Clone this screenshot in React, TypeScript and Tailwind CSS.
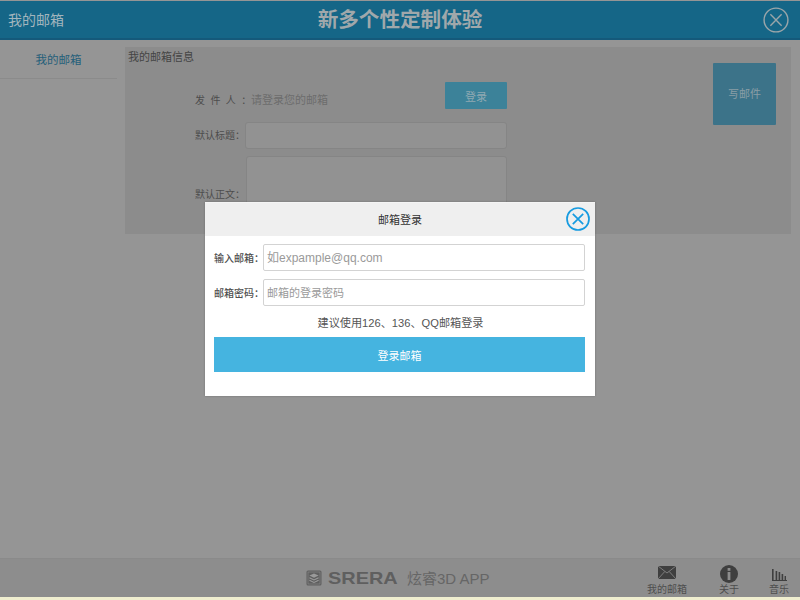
const font = { fontFamily: '"Liberation Sans","Noto Sans CJK SC",sans-serif' };

function CloseCircle({ className, stroke, width }: { className: string; stroke: string; width: number }) {
  return (
    <svg viewBox="0 0 24 24" className={className} fill="none" stroke={stroke} strokeWidth={width}>
      <circle cx="12" cy="12" r="11" />
      <path d="M6.8 6.8 17.2 17.2M17.2 6.8 6.8 17.2" />
    </svg>
  );
}

function Logo() {
  return (
    <div className="flex items-center text-[#5f5f5f]">
      <svg viewBox="0 0 16 16" className="w-[16px] h-[16px]">
        <rect x="0.5" y="0.5" width="15" height="15" rx="1.5" fill="#5f5f5f" />
        <rect x="2" y="2" width="12" height="12" fill="none" stroke="#8d8d8d" strokeWidth="0.6" />
        <path d="M8 3.4 12.6 5.6 8 7.8 3.4 5.6Z" fill="#9a9a9a" />
        <path d="M3.4 7.8 8 10 12.6 7.8M3.4 10.2 8 12.4 12.6 10.2" fill="none" stroke="#9a9a9a" strokeWidth="1.1" />
      </svg>
      <span className="ml-[6px] w-[72px] text-[17px] leading-none font-bold origin-left scale-x-[1.17] whitespace-nowrap">SRERA</span>
      <span className="ml-[7px] text-[15px] leading-none whitespace-nowrap text-[#666666]">炫睿3D APP</span>
    </div>
  );
}

export default function App() {
  return (
    <div style={font} className="relative h-[600px] w-[800px] overflow-hidden bg-[#959595] flex flex-col text-[#4f4f4f]">
      <header className="mt-px h-[39px] shrink-0 flex items-center bg-[#156687] border-b-2 border-[#14597a] relative">
        <div className="w-[150px] pl-[8px] pt-[2px] text-[14px] text-[#a2b5bd]">我的邮箱</div>
        <div className="flex-1 pr-[150px] pt-[2px] text-center text-[20.6px] font-bold text-[#a0a8ab]">新多个性定制体验</div>
        <div className="absolute right-[11px] top-[6px]">
          <CloseCircle className="w-[26px] h-[26px]" stroke="#9aa5a9" width={1.3} />
        </div>
      </header>

      <main className="flex-1 flex pt-[7px]">
        <aside className="w-[117px] shrink-0 -mt-[7px]">
          <div className="h-[39px] flex items-center justify-center text-[11.5px] text-[#255f7a] border-b border-[#8b8b8b] pt-[4px]">我的邮箱</div>
        </aside>
        <section className="ml-[8px] w-[666px] h-[187px] bg-[#8c8c8c] flex">
          <div className="w-[382px] shrink-0 relative overflow-hidden">
            <div className="pl-[3px] pt-[3px] text-[11px] leading-[14px] text-[#444444]">我的邮箱信息</div>
            <div className="flex mt-[18px] h-[27px]">
              <div className="ml-[70px] w-[56px] self-end mb-px text-[10px] tracking-[5.4px] text-[#4c4c4c] whitespace-nowrap">发件人：</div>
              <div className="self-end mb-px text-[11px] text-[#6c6c6c]">请登录您的邮箱</div>
              <div className="ml-auto w-[62px] h-[27px] bg-[#3c8299] rounded-[1px] flex items-center justify-center pt-[3px] text-[11px] text-[#8fa9b2]">登录</div>
            </div>
            <div className="flex items-center mt-[13px] h-[27px]">
              <div className="ml-[70px] w-[50px] text-[10px] text-[#4c4c4c] whitespace-nowrap">默认标题：</div>
              <div className="flex-1 h-full bg-[#929292] border border-[#858585] rounded-[3px]" />
            </div>
            <div className="flex mt-[7px] h-[80px]">
              <div className="ml-[70px] w-[51px] mt-[31px] text-[10px] text-[#4c4c4c] whitespace-nowrap">默认正文：</div>
              <div className="flex-1 h-[70px] bg-[#929292] border border-[#858585] rounded-[3px]" />
            </div>
          </div>
          <div className="ml-auto mr-[15px] mt-[16px] w-[63px] h-[62px] bg-[#3c7389] rounded-[1px] flex items-center justify-center text-[11px] text-[#8a9ea6]">写邮件</div>
        </section>
      </main>

      <footer className="h-[39px] shrink-0 flex items-center bg-[#8d8d8d] border-t border-[#8a8a8a] text-[#4d4d4d]">
        <div className="w-[306px] shrink-0" />
        <Logo />
        <div className="ml-auto flex items-end h-full pb-[1px]">
          <div className="w-[60px] flex flex-col items-center">
            <svg viewBox="0 0 18 13" className="w-[18px] h-[13px] mb-[5px]">
              <rect width="18" height="13" fill="#3f3f3f" />
              <path d="M0 0 9 7 18 0M0 13 6.8 5.5M18 13 11.2 5.5" fill="none" stroke="#8d8d8d" strokeWidth="0.8" />
            </svg>
            <span className="text-[10px] leading-[12px]">我的邮箱</span>
          </div>
          <div className="w-[58px] ml-[3px] flex flex-col items-center">
            <svg viewBox="0 0 18 18" className="w-[18px] h-[18px] mb-[1px]">
              <circle cx="9" cy="9" r="9" fill="#3f3f3f" />
              <rect x="7.6" y="3" width="2.8" height="2.8" fill="#8d8d8d" />
              <rect x="7.6" y="7" width="2.8" height="8" fill="#8d8d8d" />
            </svg>
            <span className="text-[10px] leading-[12px]">关于</span>
          </div>
          <div className="w-[42px] flex flex-col items-center">
            <svg viewBox="0 0 15 12" className="w-[15px] h-[12px] mb-[3px]">
              <path d="M0 0h1.6v11H0zM3.6 2h1.6v9H3.6zM6.6 3h1.6v8H6.6zM9.6 5h1.6v6H9.6zM12.6 7h1.4v4h-1.4zM0 11h15v1H0z" fill="#3f3f3f" />
            </svg>
            <span className="text-[10px] leading-[12px]">音乐</span>
          </div>
        </div>
      </footer>
      <div className="h-[3px] shrink-0 bg-[#efeecf]" />

      <div className="absolute left-[205px] top-[202px] w-[390px] h-[194px] bg-white border-t border-[#f4f4f4] shadow-[0_0_2px_rgba(0,0,0,0.25)]">
        <div className="h-[33px] bg-[#efefef] flex items-center justify-center pt-[2px] text-[11px] text-[#333333] relative">
          邮箱登录
          <div className="absolute right-[5px] top-[4px]">
            <CloseCircle className="w-[24px] h-[24px]" stroke="#169be0" width={1.7} />
          </div>
        </div>
        <div className="flex items-center mt-[8px] h-[27px] pl-[9px]">
          <div className="w-[49px] pt-px text-[10px] font-medium text-[#4f4f4f] whitespace-nowrap">输入邮箱：</div>
          <div className="w-[322px] h-full border border-[#d3d3d3] rounded-[2px] pl-[3px] pt-px flex items-center text-[12px] text-[#9a9a9a]">如expample@qq.com</div>
        </div>
        <div className="flex items-center mt-[8px] h-[27px] pl-[9px]">
          <div className="w-[49px] pt-px text-[10px] font-medium text-[#4f4f4f] whitespace-nowrap">邮箱密码：</div>
          <div className="w-[322px] h-full border border-[#d3d3d3] rounded-[2px] pl-[3px] pt-px flex items-center text-[11px] text-[#9a9a9a]">邮箱的登录密码</div>
        </div>
        <div className="mt-[9px] h-[16px] text-center text-[11.15px] leading-[16px] text-[#555555] pl-[1px]">建议使用126、136、QQ邮箱登录</div>
        <div className="mt-[6px] ml-[9px] w-[371px] h-[35px] bg-[#45b4e0] flex items-center justify-center pt-[3px] text-[11px] text-white">登录邮箱</div>
      </div>
    </div>
  );
}
